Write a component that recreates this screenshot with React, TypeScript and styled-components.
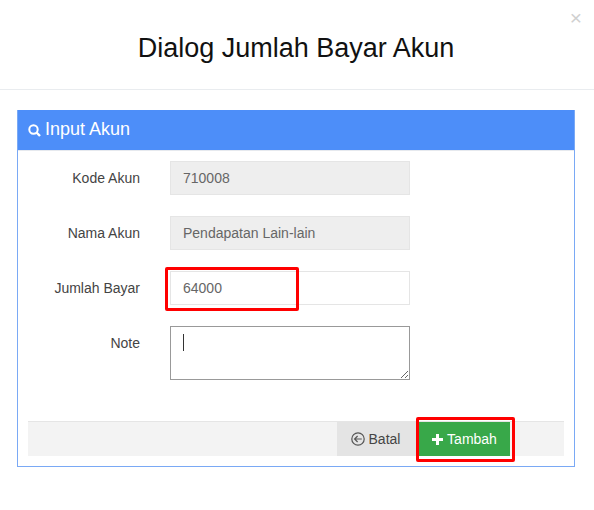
import React from 'react';
import styled, { createGlobalStyle } from 'styled-components';

const FIELDS = [
  { label: 'Kode Akun', value: '710008', disabled: true },
  { label: 'Nama Akun', value: 'Pendapatan Lain-lain', disabled: true },
  { label: 'Jumlah Bayar', value: '64000', disabled: false },
];

const App = () => {
  return (
    <Dialog>
      <GlobalStyle />
      <Header>
        <CloseButton>×</CloseButton>
        <Title>Dialog Jumlah Bayar Akun</Title>
      </Header>
      <Content>
        <Panel>
          <PanelHeading>
            <SearchIcon width="13" height="13" viewBox="0 0 13 13" fill="none" stroke="#fff">
              <circle cx="5.5" cy="5.5" r="4.2" strokeWidth="2" />
              <path d="M8.5 8.5L12 12" strokeWidth="2.4" />
            </SearchIcon>
            Input Akun
          </PanelHeading>
          <PanelBody>
            {FIELDS.map((item, idx) => {
              return (
                <FormRow key={idx}>
                  <Label>{item.label}</Label>
                  <FieldWrap>
                    <TextInput value={item.value} readOnly $disabled={item.disabled} />
                    {item.label === 'Jumlah Bayar' && <InputHighlight />}
                  </FieldWrap>
                </FormRow>
              );
            })}
            <FormRow>
              <Label>Note</Label>
              <FieldWrap>
                <NoteArea readOnly />
                <Caret />
              </FieldWrap>
            </FormRow>
          </PanelBody>
          <FormFooter>
            <CancelButton>
              <svg width="14" height="14" viewBox="0 0 14 14" fill="none" stroke="#555">
                <circle cx="7" cy="7" r="6.2" strokeWidth="1.2" />
                <path d="M10.8 7H3.6M6.6 4L3.6 7L6.6 10" strokeWidth="1.2" />
              </svg>
              Batal
            </CancelButton>
            <SubmitWrap>
              <SubmitButton>
                <svg width="11" height="11" viewBox="0 0 11 11" fill="#fff">
                  <path d="M4 0H7V4H11V7H7V11H4V7H0V4H4Z" />
                </svg>
                Tambah
              </SubmitButton>
              <ButtonHighlight />
            </SubmitWrap>
          </FormFooter>
        </Panel>
      </Content>
    </Dialog>
  );
};

export default App;

const GlobalStyle = createGlobalStyle`
  html, body {
    margin: 0;
    padding: 0;
    background: #fff;
  }
  * {
    box-sizing: border-box;
  }
`;

const Dialog = styled.div`
  width: 594px;
  height: 510px;
  overflow: hidden;
  background: #fff;
  color: #333;
  font-family: 'Liberation Sans', Arial, sans-serif;
  font-size: 14px;
`;

const Header = styled.div`
  position: relative;
  height: 90px;
  padding: 30px 2px 0 0;
  border-bottom: 1px solid #e9ecef;
  text-align: center;
`;

const Title = styled.h4`
  margin: 0;
  font-size: 27px;
  font-weight: 400;
  line-height: 36px;
  color: #111;
`;

const CloseButton = styled.span`
  position: absolute;
  top: 7px;
  right: 12px;
  font-size: 21px;
  line-height: 21px;
  color: #d0d0d0;
`;

const Content = styled.div`
  padding: 20px 19px 0 17px;
`;

const Panel = styled.div`
  height: 357px;
  padding: 0 10px 10px;
  border: 1px solid #7aa9f5;
  border-top: 0;
`;

const PanelHeading = styled.div`
  display: flex;
  align-items: center;
  gap: 4px;
  height: 41px;
  margin: 0 -10px;
  padding: 0 10px 2px;
  background: #4d8ef9;
  color: #fff;
  font-size: 18px;
  border-bottom: 1px solid #e6e9ee;
`;

const SearchIcon = styled.svg`
  margin-top: 3px;
`;

const PanelBody = styled.div`
  display: flex;
  flex-direction: column;
  gap: 21px;
  height: 270px;
  padding-top: 10px;
`;

const FormRow = styled.div`
  display: flex;
  gap: 30px;
`;

const Label = styled.label`
  width: 112px;
  padding-top: 9px;
  text-align: right;
  line-height: 16px;
  color: #444;
`;

const FieldWrap = styled.div`
  position: relative;
  width: 240px;
`;

const TextInput = styled.input<{ $disabled: boolean }>`
  display: block;
  width: 100%;
  height: 34px;
  padding: 0 12px;
  border: 1px solid #e5e5e5;
  border-radius: 0;
  outline: none;
  background: ${(props) => (props.$disabled ? '#eeeeee' : '#fff')};
  color: #666;
  font-family: inherit;
  font-size: 14px;
`;

const NoteArea = styled.textarea`
  display: block;
  width: 100%;
  height: 54px;
  padding: 6px 12px;
  border: 1px solid #999;
  border-radius: 0;
  outline: none;
  background: #fff;
  font-family: inherit;
  font-size: 14px;
`;

const Caret = styled.span`
  position: absolute;
  top: 8px;
  left: 13px;
  width: 1px;
  height: 17px;
  background: #333;
`;

const InputHighlight = styled.span`
  position: absolute;
  top: -4px;
  left: -5px;
  width: 134px;
  height: 44px;
  border: 3px solid #f00;
  border-radius: 2px;
`;

const FormFooter = styled.div`
  display: flex;
  justify-content: flex-end;
  height: 35px;
  padding-right: 54px;
  border-top: 1px solid #e5e5e5;
  background: #f3f3f3;
`;

const CancelButton = styled.button`
  display: flex;
  align-items: center;
  justify-content: center;
  gap: 4px;
  width: 80px;
  padding: 0 3px 0 0;
  border: 0;
  background: #e4e4e4;
  color: #444;
  font-family: inherit;
  font-size: 14px;
`;

const SubmitWrap = styled.div`
  position: relative;
  width: 93px;
`;

const SubmitButton = styled.button`
  display: flex;
  align-items: center;
  justify-content: center;
  gap: 4px;
  width: 100%;
  height: 100%;
  padding: 0 0 0 2px;
  border: 0;
  background: #38a849;
  color: #fff;
  font-family: inherit;
  font-size: 14px;
`;

const ButtonHighlight = styled.span`
  position: absolute;
  top: -5px;
  left: -1px;
  width: 99px;
  height: 45px;
  border: 3px solid #f00;
  border-radius: 2px;
`;
